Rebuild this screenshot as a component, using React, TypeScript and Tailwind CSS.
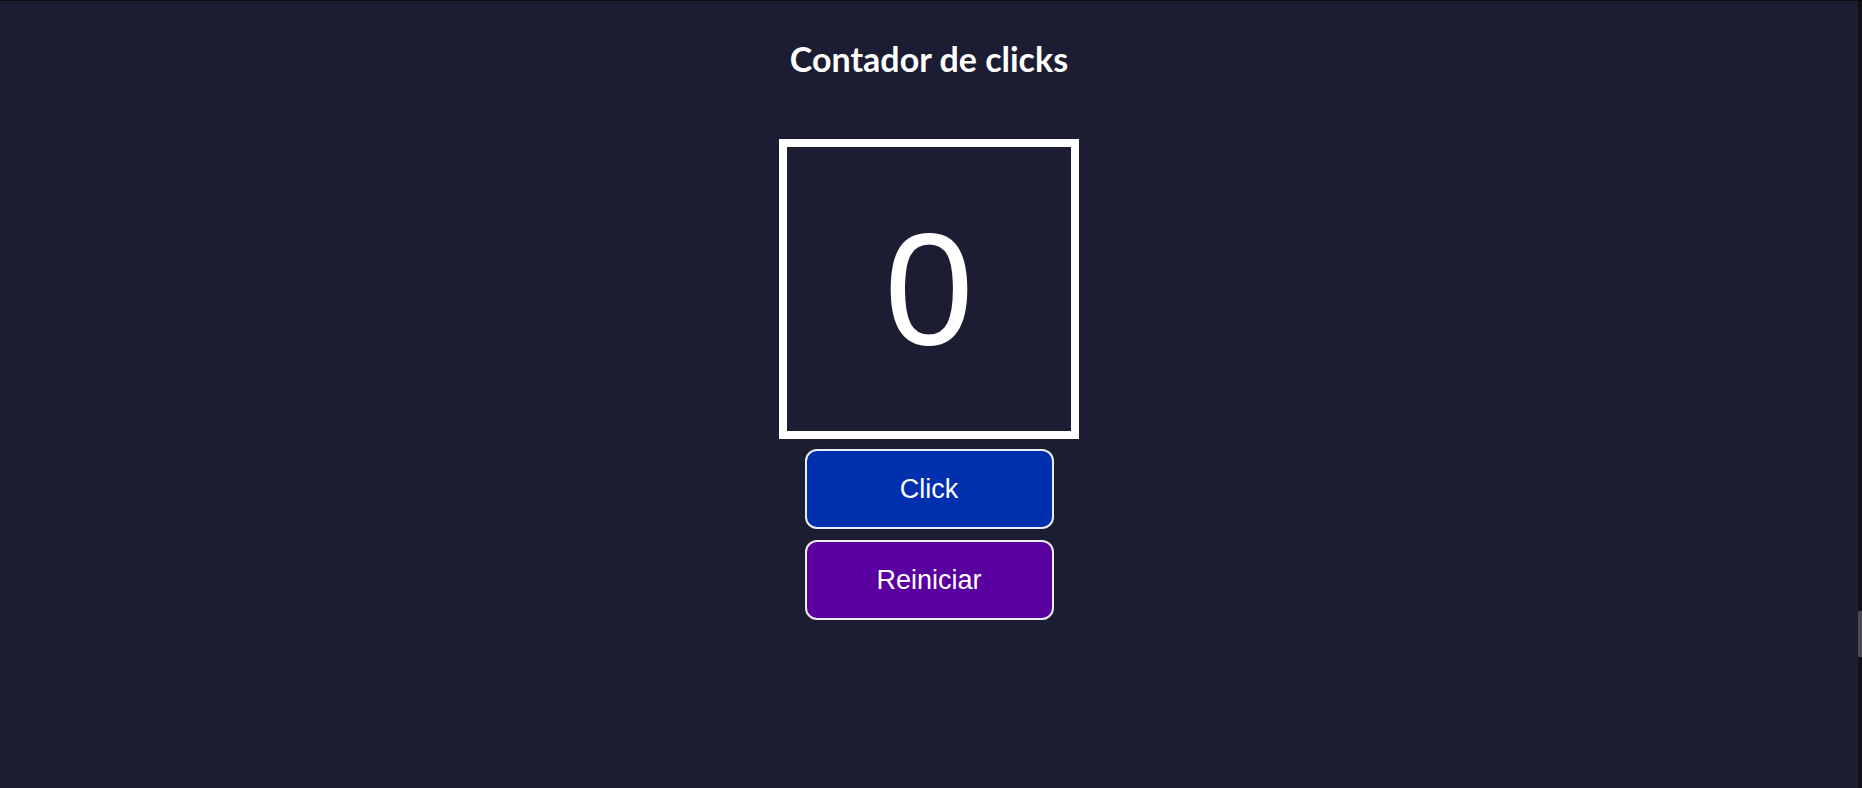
export default function App() {
  return (
    <div className="relative min-h-screen h-[788px] overflow-hidden bg-[#1c1c32] border-t border-[#0c0c0c]">
      <div className="flex flex-col items-center pr-[4px]">
        <h1 className="mt-[35px] text-[34px] leading-[46px] font-bold text-white font-['Lato',sans-serif]">
          Contador de clicks
        </h1>
        <div className="mt-[57px] flex h-[300px] w-[300px] items-center justify-center border-[8px] border-white">
          <span className="text-[160px] leading-none text-white font-['Liberation_Sans',Arial,sans-serif]">0</span>
        </div>
        <div className="mt-[10px] flex flex-col gap-[11px]">
          <button className="h-[80px] w-[249px] rounded-[12px] border-2 border-[#ececf4] bg-[#0030ae] text-[27px] text-white font-['Liberation_Sans',Arial,sans-serif]">
            Click
          </button>
          <button className="h-[80px] w-[249px] rounded-[12px] border-2 border-[#ececf4] bg-[#5b00a0] text-[27px] text-white font-['Liberation_Sans',Arial,sans-serif]">
            Reiniciar
          </button>
        </div>
      </div>
      <div className="absolute right-0 top-0 h-full w-[4px] bg-[#111111]">
        <div className="mt-[610px] h-[46px] w-full bg-[#4a4a4a]" />
      </div>
    </div>
  )
}
